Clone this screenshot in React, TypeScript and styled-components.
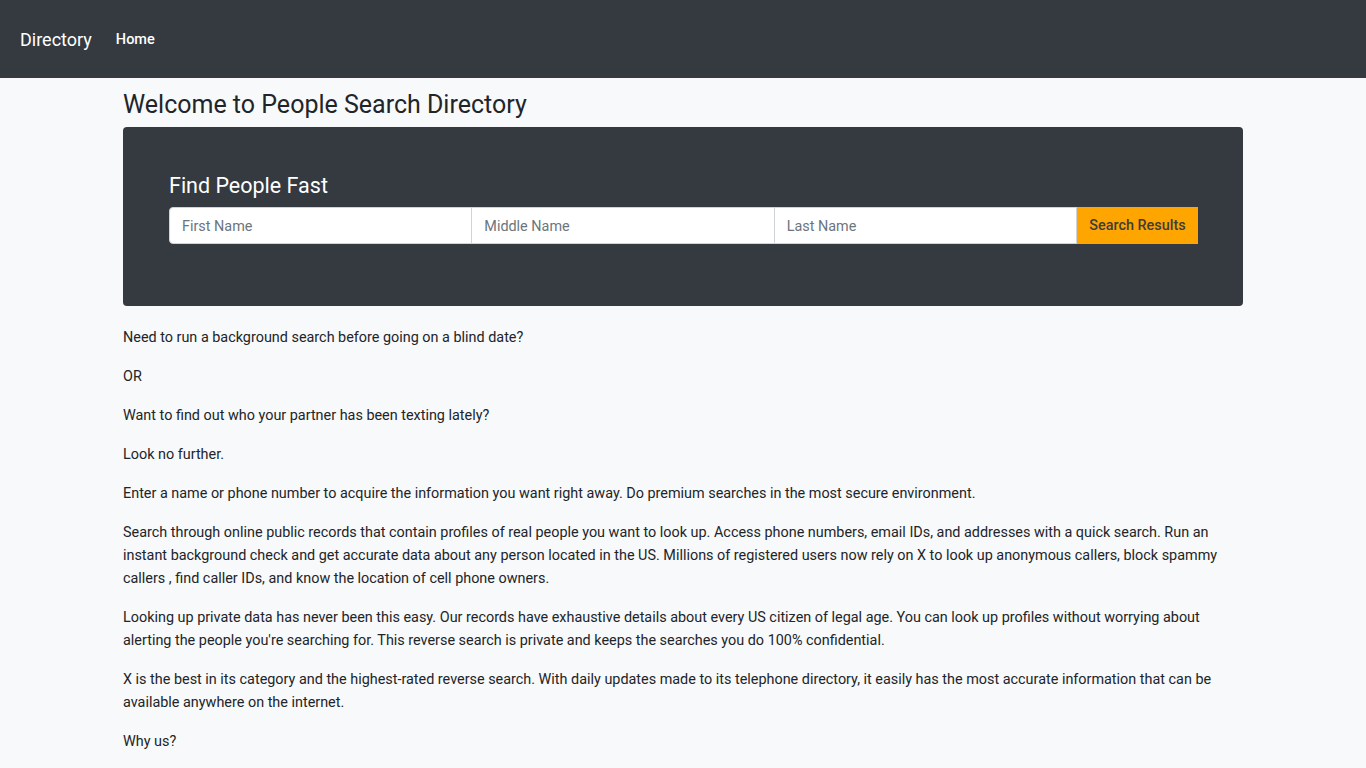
import React from "react";
import styled, { createGlobalStyle } from "styled-components";

const GlobalStyle = createGlobalStyle`
    html, body {
        margin: 0;
        padding: 0;
        background: #f8f9fa;
        font-family: Roboto, "Liberation Sans", Arial, sans-serif;
        color: #212529;
    }
    * {
        box-sizing: border-box;
    }
`;

const paragraphs = [
    "Need to run a background search before going on a blind date?",
    "OR",
    "Want to find out who your partner has been texting lately?",
    "Look no further.",
    "Enter a name or phone number to acquire the information you want right away. Do premium searches in the most secure environment.",
    "Search through online public records that contain profiles of real people you want to look up. Access phone numbers, email IDs, and addresses with a quick search. Run an instant background check and get accurate data about any person located in the US. Millions of registered users now rely on X to look up anonymous callers, block spammy callers , find caller IDs, and know the location of cell phone owners.",
    "Looking up private data has never been this easy. Our records have exhaustive details about every US citizen of legal age. You can look up profiles without worrying about alerting the people you're searching for. This reverse search is private and keeps the searches you do 100% confidential.",
    "X is the best in its category and the highest-rated reverse search. With daily updates made to its telephone directory, it easily has the most accurate information that can be available anywhere on the internet.",
    "Why us?",
];

export default function App() {
    return (
        <>
            <GlobalStyle />
            <Navbar>
                <Brand href="#">Directory</Brand>
                <NavLink href="#">Home</NavLink>
            </Navbar>
            <Container>
                <PageTitle>Welcome to People Search Directory</PageTitle>
                <SearchCard>
                    <CardTitle>Find People Fast</CardTitle>
                    <InputGroup>
                        <NameInput placeholder="First Name" />
                        <NameInput placeholder="Middle Name" />
                        <NameInput placeholder="Last Name" />
                        <SearchButton type="button">Search Results</SearchButton>
                    </InputGroup>
                </SearchCard>
                <Copy>
                    {paragraphs.map((text, i) => (
                        <p key={i}>{text}</p>
                    ))}
                </Copy>
            </Container>
        </>
    );
}

const Navbar = styled.nav`
    height: 78px;
    background: #343a40;
    display: flex;
    align-items: center;
    padding: 0 20px;
`;

const Brand = styled.a`
    color: #fff;
    font-size: 18px;
    text-decoration: none;
    margin-right: 24px;
`;

const NavLink = styled.a`
    color: #fff;
    font-size: 14.5px;
    font-weight: 500;
    text-decoration: none;
`;

const Container = styled.main`
    width: 1120px;
    margin: 0 auto;
    padding-top: 12px;
`;

const PageTitle = styled.h1`
    font-size: 25px;
    font-weight: 400;
    line-height: 29px;
    margin: 0 0 8px;
    color: #212529;
`;

const SearchCard = styled.section`
    background: #343a40;
    border-radius: 4px;
    padding: 45px 45px 62px 46px;
`;

const CardTitle = styled.h2`
    color: #fff;
    font-size: 21.5px;
    font-weight: 400;
    line-height: 28px;
    margin: 0 0 7px;
`;

const InputGroup = styled.div`
    display: flex;
    height: 37px;
`;

const NameInput = styled.input`
    flex: 1;
    min-width: 0;
    height: 37px;
    border: 1px solid #ced4da;
    margin-left: -1px;
    padding: 2px 12px 0;
    font-family: Roboto, "Liberation Sans", Arial, sans-serif;
    font-size: 14.4px;
    color: #495057;
    background: #fff;

    &:first-child {
        margin-left: 0;
        border-radius: 4px 0 0 4px;
    }

    &::placeholder {
        color: #6c757d;
    }
`;

const SearchButton = styled.button`
    width: 121px;
    flex: none;
    height: 37px;
    border: none;
    background: #ffa500;
    color: #3d3d3d;
    font-family: Roboto, "Liberation Sans", Arial, sans-serif;
    font-size: 14.4px;
    font-weight: 500;
    padding: 0 12px;
    border-radius: 0;
`;

const Copy = styled.div`
    padding-top: 20px;
    font-size: 14.4px;
    line-height: 23px;
    color: #212529;

    p {
        margin: 0 0 16px;
    }
`;
